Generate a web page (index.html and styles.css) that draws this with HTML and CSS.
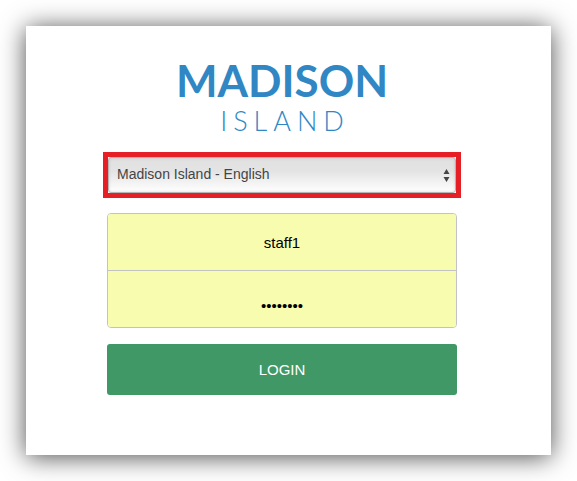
FILE: index.html
```
<!DOCTYPE html>
<html lang="en">
<head>
<meta charset="utf-8">
<meta name="viewport" content="width=device-width, initial-scale=1">
<title>Madison Island</title>
<link rel="stylesheet" href="styles.css">
</head>
<body>
<main class="card">
  <h1 class="logo"><span class="logo-name">MADISON</span><span class="logo-sub">ISLAND</span></h1>
  <form class="login">
    <div class="store">
      <select class="store-select" aria-label="Store view">
        <option>Madison Island - English</option>
      </select>
      <svg class="store-arrows" viewBox="0 0 6 13" aria-hidden="true"><path d="M3 0 6 5H0zM0 8h6L3 13z"/></svg>
    </div>
    <div class="fields">
      <input class="field" type="text" value="staff1" aria-label="User name">
      <input class="field field-password" type="password" value="password" aria-label="Password">
    </div>
    <button class="submit" type="button">LOGIN</button>
  </form>
</main>
</body>
</html>
```
FILE: styles.css
```
* {
  box-sizing: border-box;
}

body {
  margin: 0;
  padding: 26px;
  background: #fff;
  font-family: "Liberation Sans", Arial, sans-serif;
}

.card {
  padding: 34px 94px 60px 81px;
  background: #fff;
  box-shadow: 0 2px 24px rgba(0, 0, 0, 0.7);
}

.logo {
  display: flex;
  flex-direction: column;
  align-items: center;
  margin: 0 0 10px;
  color: #3087c4;
  font-family: Lato, sans-serif;
}

.logo-name {
  font-size: 44px;
  font-weight: 700;
  line-height: 40px;
}

.logo-sub {
  padding-left: 6px;
  font-size: 27px;
  font-weight: 300;
  line-height: 42px;
  letter-spacing: 6px;
}

.login {
  display: flex;
  flex-direction: column;
}

.store {
  position: relative;
  margin: 0 -4px 15px;
  border: 5px solid #e61e25;
}

.store-select {
  display: block;
  width: 100%;
  height: 36px;
  padding: 0 24px 2px 8px;
  border: 1px solid #b5b5b5;
  border-radius: 3px;
  appearance: none;
  background: linear-gradient(#e0e0e0, #e4e4e4 40%, #fff);
  box-shadow: inset 0 0 3px rgba(0, 0, 0, 0.15);
  color: #444;
  font: 14px "Liberation Sans", Arial, sans-serif;
}

.store-arrows {
  position: absolute;
  top: 12px;
  right: 6px;
  width: 7px;
  height: 13px;
  fill: #444;
}

.fields {
  display: flex;
  flex-direction: column;
  margin-bottom: 16px;
  border: 1px solid #c2c2c8;
  border-radius: 4px;
  overflow: hidden;
}

.field {
  width: 100%;
  height: 56px;
  padding: 0 8px;
  border: 0;
  background: #f8fcaf;
  color: #000;
  font: 15px "Liberation Sans", Arial, sans-serif;
  text-align: center;
}

.field-password {
  height: 57px;
  padding-top: 12px;
  border-top: 1px solid #c2c2c2;
}

.submit {
  height: 51px;
  border: 0;
  border-radius: 3px;
  background: #3f9865;
  color: #fff;
  font: 15px "Liberation Sans", Arial, sans-serif;
}
```
